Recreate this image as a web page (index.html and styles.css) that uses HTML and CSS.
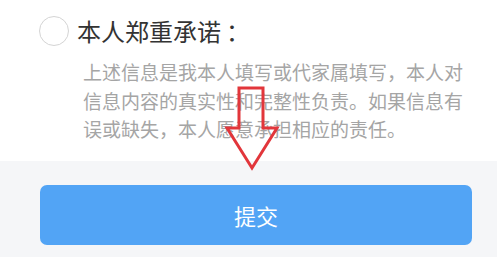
FILE: index.html
```html
<!DOCTYPE html>
<html lang="zh-CN">
<head>
<meta charset="utf-8">
<link rel="stylesheet" href="styles.css">
</head>
<body>
<div class="page">
  <section class="top">
    <div class="title-row">
      <span class="radio"></span>
      <span class="title">本人郑重承诺<span class="colon">：</span></span>
    </div>
    <p class="desc">上述信息是我本人填写或代家属填写，本人对信息内容的真实性和完整性负责。如果信息有误或缺失，本人愿意承担相应的责任。</p>
  </section>
  <section class="bottom">
    <button class="submit">提交</button>
  </section>
  <svg class="arrow" width="497" height="257" viewBox="0 0 497 257">
    <polygon points="239,88 263,88 263,128 277,128 252,168 227,128 239,128" fill="none" stroke="#e2363b" stroke-width="3" stroke-linejoin="miter"/>
  </svg>
</div>
</body>
</html>
```
FILE: styles.css
```css
html, body {
  margin: 0;
  padding: 0;
  background: #f5f6f8;
}
.page {
  position: relative;
  width: 497px;
  height: 257px;
  overflow: hidden;
  font-family: "Noto Sans CJK SC", "Noto Sans", sans-serif;
}
.top {
  height: 161px;
  background: #ffffff;
  box-sizing: border-box;
  padding-top: 16px;
}
.title-row {
  display: flex;
  align-items: center;
  gap: 8px;
  padding-left: 39px;
  height: 30px;
}
.radio {
  width: 28px;
  height: 28px;
  border: 1.5px solid #d4d4d4;
  border-radius: 50%;
  flex: none;
}
.title {
  font-size: 24px;
  line-height: 30px;
  color: #333333;
}
.colon {
  margin-left: 5px;
}
.desc {
  margin: 12px 0 0 83px;
  width: 382px;
  font-size: 19px;
  line-height: 28.5px;
  color: #a5a5a5;
}
.bottom {
  height: 96px;
  box-sizing: border-box;
  padding: 24px 25px 0 40px;
  background: #f5f6f8;
}
.submit {
  display: block;
  width: 100%;
  height: 60px;
  border: none;
  border-radius: 7px;
  background: #52a4f5;
  color: #ffffff;
  font-family: "Noto Sans CJK SC", "Noto Sans", sans-serif;
  font-size: 22px;
  padding: 0;
}
.arrow {
  position: absolute;
  left: 0;
  top: 0;
  pointer-events: none;
}
```
